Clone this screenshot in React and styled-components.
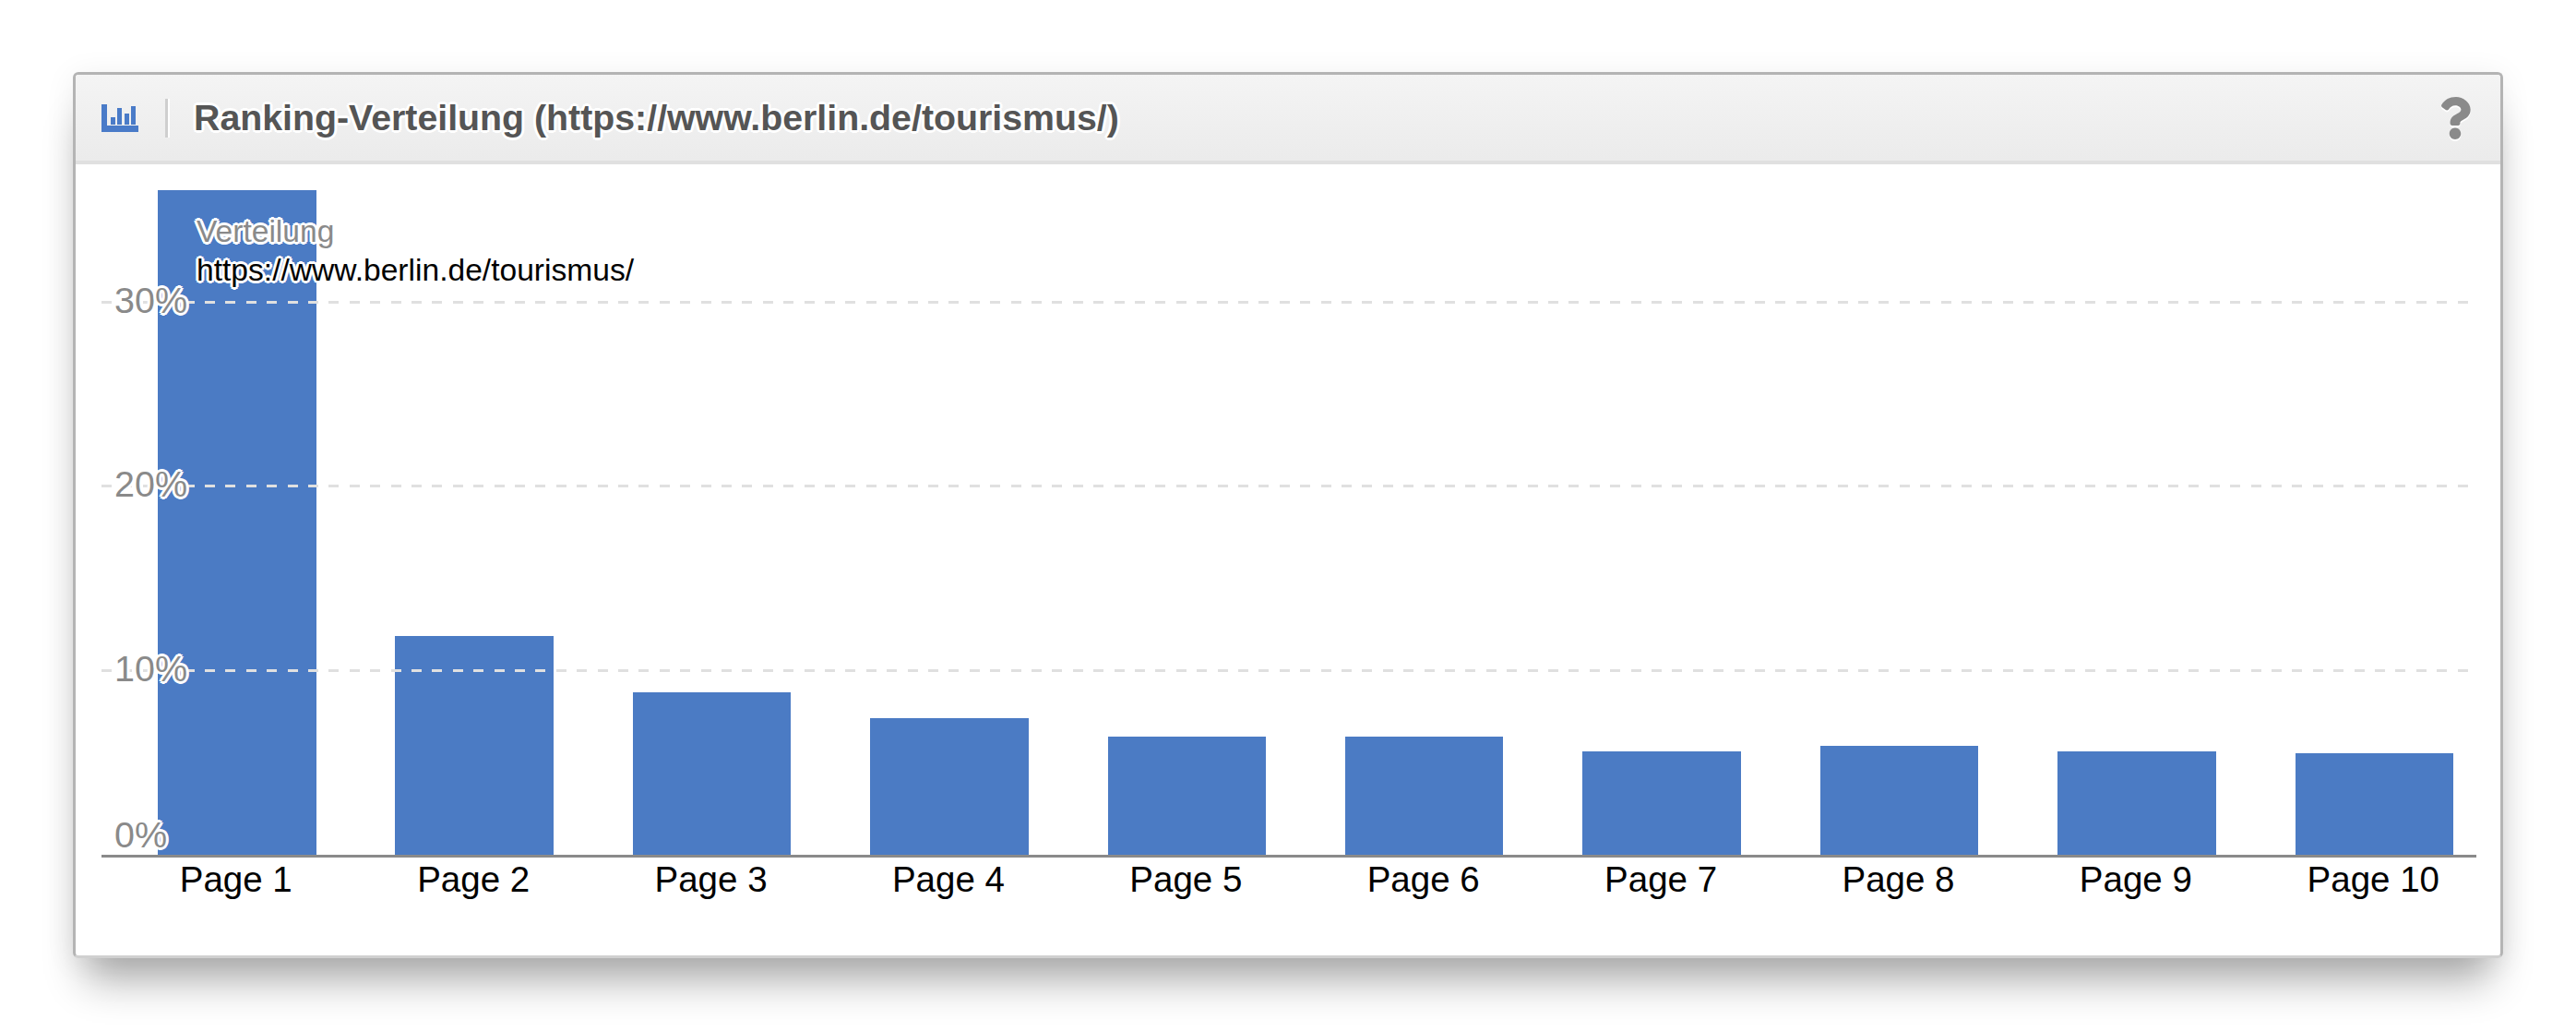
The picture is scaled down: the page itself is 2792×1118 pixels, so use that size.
import React from 'react';
import styled, { createGlobalStyle } from 'styled-components';
import { FaQuestion } from 'react-icons/fa';

const PX_PER_PERCENT = 19.95;
const pages = [
  { label: 'Page 1', value: 36.1 },
  { label: 'Page 2', value: 11.9 },
  { label: 'Page 3', value: 8.8 },
  { label: 'Page 4', value: 7.4 },
  { label: 'Page 5', value: 6.4 },
  { label: 'Page 6', value: 6.4 },
  { label: 'Page 7', value: 5.6 },
  { label: 'Page 8', value: 5.9 },
  { label: 'Page 9', value: 5.6 },
  { label: 'Page 10', value: 5.5 },
];
const ticks = [30, 20, 10, 0];

const halo = `
  text-shadow: -3px 0 0 #fff, 3px 0 0 #fff, 0 -3px 0 #fff, 0 3px 0 #fff,
    -2px -2px 0 #fff, 2px -2px 0 #fff, -2px 2px 0 #fff, 2px 2px 0 #fff;
`;

const ChartIcon = () => (
  <svg width="40" height="30" viewBox="0 0 40 30" fill="#4a7bc8">
    <path d="M0 0h6v23h34v7H0z" />
    <rect x="10" y="14" width="5" height="8" />
    <rect x="17" y="4" width="5" height="18" />
    <rect x="25" y="10" width="5" height="12" />
    <rect x="32" y="2" width="5" height="20" />
  </svg>
);

const App = () => {
  return (
    <>
      <GlobalStyle />
      <Page>
        <Panel>
          <Header>
            <ChartIcon />
            <Separator />
            <Title>Ranking-Verteilung (https://www.berlin.de/tourismus/)</Title>
            <Help>
              <FaQuestion size={46} />
            </Help>
          </Header>
          <Body>
            <Plot>
              <BarRow>
                {pages.map((page) => (
                  <Bar key={page.label} style={{ height: page.value * PX_PER_PERCENT }} />
                ))}
              </BarRow>
              {ticks.filter((tick) => tick > 0).map((tick) => (
                <GridLine key={tick} style={{ bottom: tick * PX_PER_PERCENT }} />
              ))}
              {ticks.map((tick) => (
                // the 0% label sits above the axis, the others are centred on their line
                <Tick key={tick} style={{ bottom: tick === 0 ? 22 : tick * PX_PER_PERCENT + 3 }}>
                  {tick}%
                </Tick>
              ))}
              <Legend>
                <LegendName>Verteilung</LegendName>
                <LegendUrl>https://www.berlin.de/tourismus/</LegendUrl>
              </Legend>
            </Plot>
            <Labels>
              {pages.map((page) => (
                <Label key={page.label}>{page.label}</Label>
              ))}
            </Labels>
          </Body>
        </Panel>
      </Page>
    </>
  );
};

export default App;

const GlobalStyle = createGlobalStyle`
  html, body {
    margin: 0;
    background: #fff;
    font-family: "Liberation Sans", Arial, sans-serif;
  }
`;

const Page = styled.div`
  width: 2792px;
  height: 1118px;
  padding: 78px 79px 0;
  box-sizing: border-box;
  overflow: hidden;
`;

const Panel = styled.section`
  width: 2634px;
  height: 960px;
  box-sizing: border-box;
  background: #fff;
  border: 3px solid #b4b4b4;
  border-bottom-color: #d0d0d0;
  border-radius: 6px;
  box-shadow: 0 38px 42px -14px rgba(0, 0, 0, 0.32), 0 4px 34px rgba(0, 0, 0, 0.07);
`;

const Header = styled.header`
  display: flex;
  align-items: center;
  height: 97px;
  box-sizing: border-box;
  padding: 0 26px 0 28px;
  background: linear-gradient(#f4f4f4, #ebebeb);
  border-bottom: 4px solid #e0e0e0;
  border-radius: 3px 3px 0 0;
`;

const Separator = styled.div`
  width: 3px;
  height: 42px;
  margin: 0 26px 0 29px;
  background: #cfcfcf;
  border-right: 2px solid #fff;
`;

const Title = styled.h2`
  flex: 1;
  margin: 0;
  font-size: 39.3px;
  font-weight: 700;
  color: #555;
  ${halo}
`;

const Help = styled.div`
  display: flex;
  color: #8a8a8a;
  filter: drop-shadow(0 2px 0 #fff);
`;

const Body = styled.div`
  padding: 28px 0 0 28px;
`;

const Plot = styled.div`
  position: relative;
  width: 2574px;
  height: 720px;
  border-bottom: 3px solid #8a8a8a;
`;

const BarRow = styled.div`
  display: flex;
  align-items: flex-end;
  gap: 85.9px;
  height: 100%;
  padding-left: 61px;
`;

const Bar = styled.div`
  flex: 0 0 171.5px;
  background: #4b7bc4;
`;

const GridLine = styled.div`
  position: absolute;
  left: 0;
  width: 2573px;
  height: 3px;
  margin-bottom: -1px;
  background: repeating-linear-gradient(90deg, #e0e0e0 0 11px, transparent 11px 22.4px);
`;

const Tick = styled.div`
  position: absolute;
  left: 14px;
  margin-bottom: -22px;
  font-size: 39.5px;
  line-height: 44px;
  color: #8a8a8a;
  ${halo}
`;

const Legend = styled.div`
  position: absolute;
  left: 103px;
  top: 24px;
  font-size: 33.6px;
  line-height: 42px;
`;

const LegendName = styled.div`
  color: #8a8a8a;
  ${halo}
`;

const LegendUrl = styled.div`
  color: #000;
  ${halo}
`;

const Labels = styled.div`
  display: flex;
  gap: 85.9px;
  padding: 2px 0 0 60px;
`;

const Label = styled.div`
  flex: 0 0 171.5px;
  font-size: 38.5px;
  line-height: 44px;
  text-align: center;
  color: #000;
`;
